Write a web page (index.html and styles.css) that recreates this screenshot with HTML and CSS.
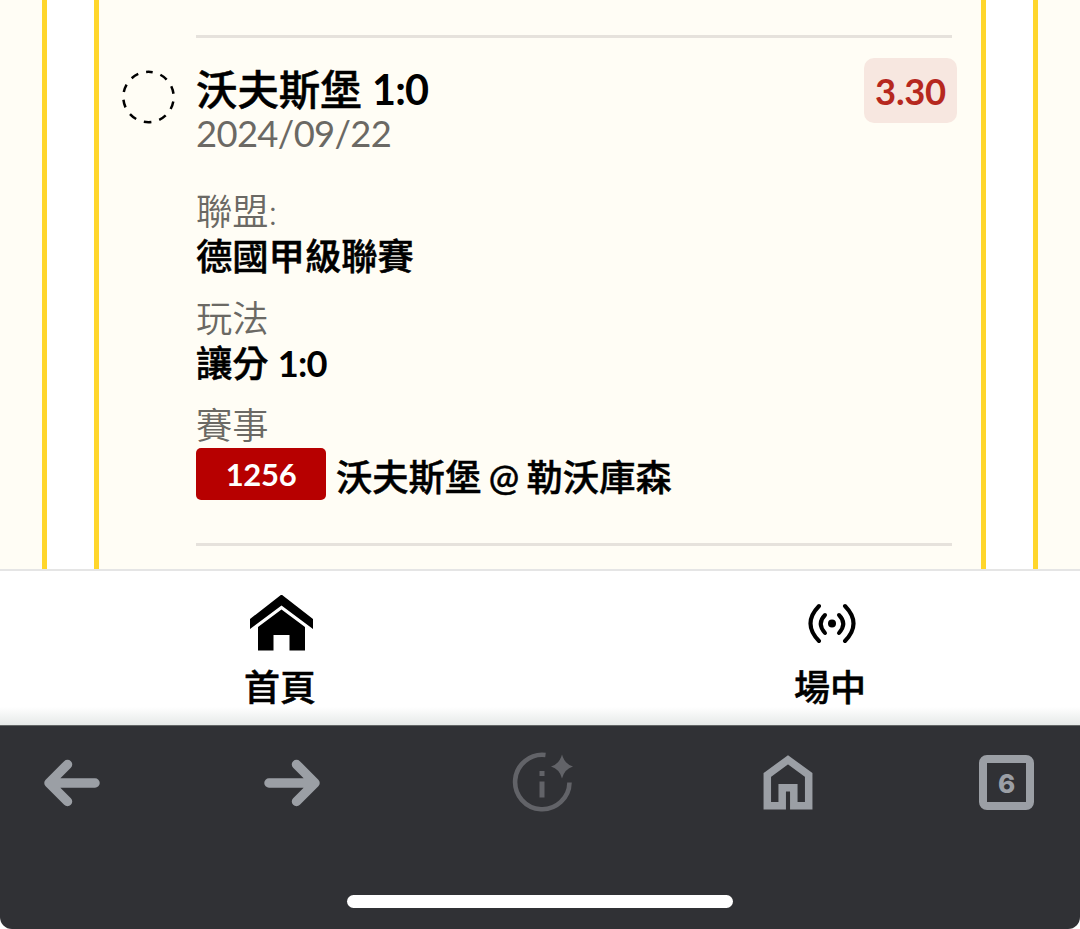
FILE: index.html
```
<!DOCTYPE html>
<html lang="zh-Hant">
<head>
  <meta charset="UTF-8" />
  <title>投注明細</title>
  <link rel="stylesheet" href="styles.css">
</head>
<body>
  <div class="screen">

    <!-- BET SLIP -->
    <main class="slip">
      <div class="outer-edge left"></div>
      <div class="card">
        <div class="divider"></div>
        <div class="bet">
          <svg class="status" viewBox="0 0 54 54">
            <circle cx="27" cy="26.5" r="25.2" />
          </svg>
          <div class="bet-body">
            <h2>沃夫斯堡 <b>1:0</b></h2>
            <div class="date">2024/09/22</div>
            <dl>
              <dt>聯盟:</dt>
              <dd>德國甲級聯賽</dd>
              <dt>玩法</dt>
              <dd>讓分 <b>1:0</b></dd>
              <dt>賽事</dt>
              <dd class="match"><span class="match-id">1256</span><span class="teams">沃夫斯堡 @ 勒沃庫森</span></dd>
            </dl>
          </div>
          <div class="odds">3.30</div>
        </div>
        <div class="divider"></div>
      </div>
      <div class="outer-edge right"></div>
    </main>

    <!-- SITE NAV -->
    <nav class="site-nav">
      <a class="nav-item">
        <svg width="64" height="58" viewBox="0 0 64 58">
          <path d="M31.500 -.5 63 24V34L31.500 10.500 0 34V24Z" />
          <path d="M31.500 14.500 55 32V55.500H39.500V40H23.500V55.500H8V32Z" />
        </svg>
        <span>首頁</span>
      </a>
      <a class="nav-item">
        <svg width="50" height="58" viewBox="0 0 50 58">
          <circle cx="25" cy="28.500" r="4" />
          <g class="waves">
            <path d="M18 20Q9.500 28.500 18 38M32 20Q40.500 28.500 32 38" />
            <path d="M12 11Q-5 28.500 12 46M38 11Q55 28.500 38 46" />
          </g>
        </svg>
        <span>場中</span>
      </a>
    </nav>

    <!-- BROWSER TOOLBAR -->
    <footer class="toolbar">
      <div class="tools">
        <svg class="back" width="58" height="50" viewBox="0 0 58 50">
          <path class="arrow" d="M52 25H6M24.500 6.500 6 25 24.500 43.500" />
        </svg>
        <svg class="forward" width="58" height="50" viewBox="0 0 58 50">
          <path class="arrow" d="M6 25H52M33.500 6.500 52 25 33.500 43.500" />
        </svg>
        <svg class="info" width="62" height="62" viewBox="0 0 62 62">
          <path class="ring" d="M34.500 3A27.200 27.200 0 1 0 58.500 30.500" />
          <path d="M28.500 19h5v5h-5zM28.500 29.500h5v16h-5z" />
          <path d="M51 2.500Q53.500 12 62 14.500 53.500 17 51 26.500 48.500 17 40 14.500 48.500 12 51 2.500Z" />
        </svg>
        <svg class="home" width="50" height="56" viewBox="0 0 50 56">
          <path class="house" d="M4.300 20 25 4.800 45.700 20V50.700H30.800V32.800H19.200V50.700H4.300Z" />
        </svg>
        <div class="tabs">6</div>
      </div>
      <div class="home-bar"></div>
    </footer>

  </div>
</body>
</html>
```
FILE: styles.css
```
* {
  margin: 0;
  padding: 0;
  box-sizing: border-box;
}

body {
  font-family: Lato, "Noto Sans CJK TC", sans-serif;
  background: #fff;
  color: #000;
  overflow: hidden;
}

svg {
  display: block;
  flex-shrink: 0;
}

b {
  font-weight: 700;
  letter-spacing: -0.8px;
  -webkit-text-stroke: 0;
}

.screen {
  width: 1080px;
  height: 929px;
  display: flex;
  flex-direction: column;
}

/* BET SLIP */
.slip {
  height: 569px;
  display: flex;
  justify-content: space-between;
}

.outer-edge {
  background: #fffdf5;
}

.outer-edge.left {
  width: 47px;
  border-right: 5px solid #ffd62b;
}

.outer-edge.right {
  width: 47px;
  border-left: 5px solid #ffd62b;
}

.card {
  width: 892px;
  padding: 35px 29px 0 23px;
  background: #fffdf5;
  border: 5px solid #ffd62b;
  border-width: 0 5px;
}

.divider {
  height: 3px;
  margin-left: 74px;
  background: #e6e2dc;
}

.bet {
  height: 505px;
  display: flex;
  align-items: flex-start;
}

.status {
  width: 54px;
  height: 54px;
  margin-top: 32px;
  fill: none;
  stroke: #000;
  stroke-width: 2.5;
  stroke-dasharray: 7.8 8.033;
  stroke-dashoffset: 3.5;
  transform: rotate(-90deg);
}

.bet-body {
  flex: 1;
  padding: 28px 0 0 20px;
}

h2 {
  font-size: 41.4px;
  font-weight: 500;
  line-height: 46px;
  -webkit-text-stroke: 0.5px #000;
}

.date {
  font-size: 36.4px;
  line-height: 42px;
  letter-spacing: -0.65px;
  color: #6b6964;
}

dl {
  margin-top: 35px;
  font-size: 36.3px;
  line-height: 44px;
}

dt {
  color: #6b6964;
  font-weight: 350;
}

dd {
  padding-top: 1px;
  margin-bottom: 18px;
  font-weight: 500;
  -webkit-text-stroke: 0.5px #000;
}

.match {
  display: flex;
  align-items: flex-start;
  gap: 10px;
  line-height: 52px;
}

.match-id {
  width: 130px;
  height: 52px;
  border-radius: 5px;
  background: #b70000;
  color: #fff;
  font-size: 31px;
  font-weight: 700;
  letter-spacing: -0.3px;
  text-align: center;
  -webkit-text-stroke: 0;
}

.teams {
  padding-top: 3px;
  word-spacing: -1.7px;
}

.odds {
  width: 93px;
  height: 65px;
  margin: 20px -5px 0 0;
  border-radius: 10px;
  background: #f7e7e0;
  color: #b6281e;
  font-size: 36.4px;
  font-weight: 700;
  letter-spacing: -0.3px;
  line-height: 67px;
  text-align: center;
}

/* SITE NAV */
.site-nav {
  height: 156px;
  display: flex;
  padding-left: 5px;
  border-top: 2px solid #e5e5e5;
  background: linear-gradient(#fff 136px, #e6e9e8);
  overflow: hidden;
}

.nav-item {
  flex: 0 0 550px;
  display: flex;
  flex-direction: column;
  align-items: center;
  padding-top: 24px;
  font-size: 36px;
  font-weight: 500;
  line-height: 44px;
  -webkit-text-stroke: 0.5px #000;
}

.nav-item svg {
  margin-left: 4px;
}

.nav-item span {
  margin-top: 12px;
}

.waves {
  fill: none;
  stroke: #000;
  stroke-width: 4;
  stroke-linecap: round;
}

/* BROWSER TOOLBAR */
.toolbar {
  height: 204px;
  display: flex;
  flex-direction: column;
  align-items: center;
  justify-content: space-between;
  padding-bottom: 21px;
  border-radius: 0 0 12px 12px;
  border-top: 1px solid #626565;
  background: #303135;
}

.tools {
  width: 100%;
  height: 113px;
  display: flex;
  align-items: center;
  padding-left: 43px;
  fill: #9b9fa5;
}

.forward {
  margin-left: 162px;
}

.info {
  margin-left: 190px;
  fill: #626368;
}

.home {
  margin-left: 190px;
}

.arrow {
  fill: none;
  stroke: #9b9fa5;
  stroke-width: 9.5;
  stroke-linecap: round;
  stroke-linejoin: round;
}

.ring {
  fill: none;
  stroke: #626368;
  stroke-width: 4.6;
}

.house {
  fill: none;
  stroke: #9b9fa5;
  stroke-width: 7.5;
}

.tabs {
  width: 55px;
  height: 55px;
  margin-left: 166px;
  border: 8px solid #9b9fa5;
  border-radius: 8px;
  color: #9b9fa5;
  font-family: Inter, sans-serif;
  font-size: 26px;
  font-weight: 800;
  line-height: 41px;
  text-align: center;
}

.home-bar {
  width: 386px;
  height: 13px;
  border-radius: 7px;
  background: #fff;
}
```
